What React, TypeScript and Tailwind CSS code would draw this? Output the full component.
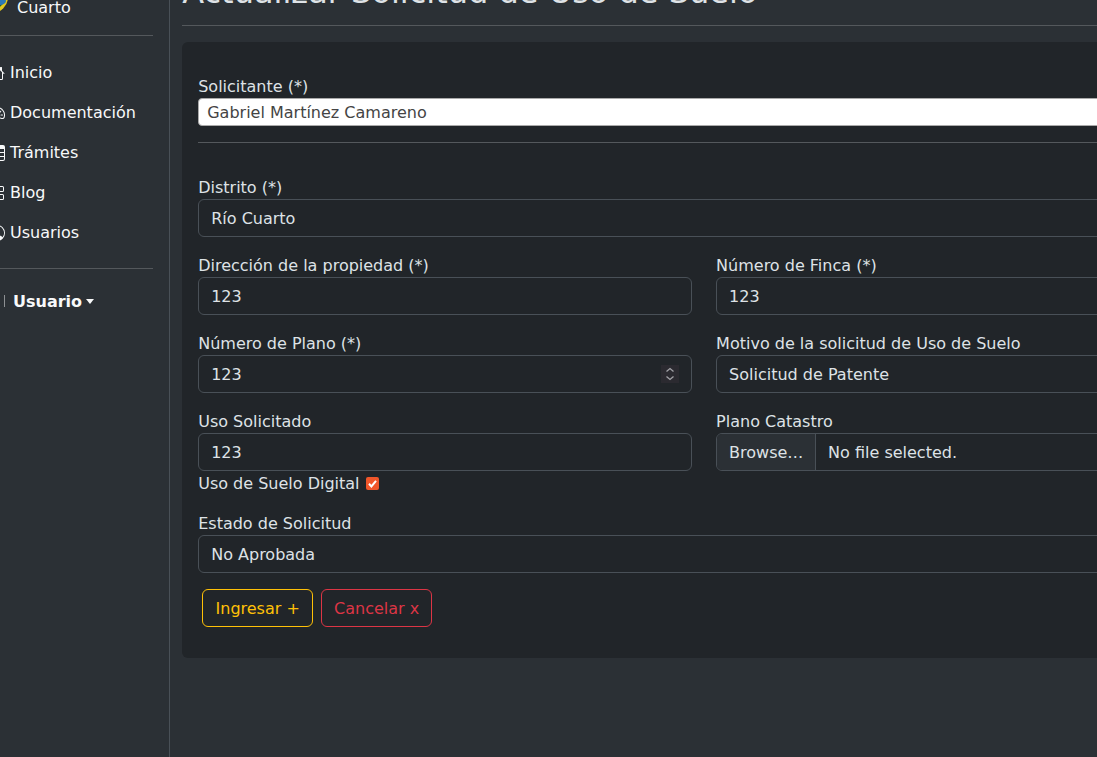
import type { ReactNode } from "react";
import { BsGrid, BsHouse, BsPersonCircle, BsSpeedometer2, BsTable } from "react-icons/bs";

const navItems = [
  { label: "Inicio", icon: BsHouse },
  { label: "Documentación", icon: BsSpeedometer2 },
  { label: "Trámites", icon: BsTable },
  { label: "Blog", icon: BsGrid },
  { label: "Usuarios", icon: BsPersonCircle },
];

const Logo = () => (
  <svg viewBox="0 0 32 32" className="w-8 h-8 -my-1 -ml-[13px] mr-[9px] shrink-0 -translate-y-[10px]">
    <circle cx="16" cy="16" r="16" fill="#e2c91f" />
    <circle cx="15.5" cy="14.5" r="14" fill="#1f5a34" />
    <ellipse cx="24" cy="20" rx="6" ry="4" fill="#2c79b8" />
    <ellipse cx="24" cy="14" rx="5" ry="3" fill="#3f9a4a" />
  </svg>
);

const Field = ({ label, children }: { label: string; children: ReactNode }) => (
  <div className="mb-4">
    <div className="h-6 leading-[26px] text-[#dee2e6]">{label}</div>
    {children}
  </div>
);

const Control = ({ children }: { children: ReactNode }) => (
  <div className="relative h-[38px] px-3 pt-[2px] flex items-center rounded-md border border-[#495057] bg-[#212529] text-[#dee2e6]">
    {children}
  </div>
);

const Spinner = () => (
  <div className="absolute right-[12px] top-[9px] w-[18px] h-[18px] bg-[#2b2a30] flex items-center justify-center">
    <svg viewBox="0 0 18 18" className="w-[18px] h-[18px]" fill="none" stroke="#a3a3a8" strokeWidth="1.3">
      <path d="M5.5 6.5 9 3.5l3.5 3" />
      <path d="M5.5 11.5 9 14.5l3.5-3" />
    </svg>
  </div>
);

export default function App() {
  return (
    <div className="w-[1097px] h-[757px] overflow-hidden bg-[#2b3035] font-['DejaVu_Sans',sans-serif] text-base text-[#dee2e6]">
      <div className="flex w-[1265px] min-h-[817px] -mt-[60px] -ml-[27px]">
        <aside className="w-[197.2px] shrink-0 pt-[55px] pl-4 pr-4 border-r border-[#495057] text-[#f8f9fa]">
          <div className="flex items-center h-6 leading-6">
            <Logo />
            <span className="pt-[2px]">Cuarto</span>
          </div>
          <hr className="my-4 border-[#54585c]" />
          <ul>
            {navItems.map((item) => (
              <li key={item.label} className="flex items-center h-10 pt-[2px] gap-[5px]">
                <item.icon className="w-4 h-4 shrink-0" />
                <span>{item.label}</span>
              </li>
            ))}
          </ul>
          <hr className="my-4 border-[#54585c]" />
          <div className="flex items-center h-8 font-bold">
            <div className="w-px h-3 ml-[15px] mr-2 shrink-0 bg-[#8d9093]" />
            <span className="pt-[2px]">Usuario</span>
            <span className="ml-1 border-t-[5px] border-x-[4px] border-x-transparent border-t-[#f8f9fa]" />
          </div>
        </aside>

        <main className="flex-1 pt-[33px] px-3">
          <h2 className="h-[39px] mb-[13px] text-[32px] leading-[38px] text-[#dee2e6]">
            Actualizar Solicitud de Uso de Suelo
          </h2>
          <hr className="mb-4 border-[#54585c]" />

          <div className="rounded-md bg-[#212529] px-4 pt-8 pb-[31px]">
            <div className="h-6 leading-[26px] text-[#dee2e6]">Solicitante (*)</div>
            <div className="h-[28px] px-2 pt-[2px] flex items-center bg-white rounded border border-[#aaaaaa] text-[#444444]">
              Gabriel Martínez Camareno
            </div>
            <hr className="mt-4 mb-8 border-[#54585c]" />

            <Field label="Distrito (*)">
              <Control>Río Cuarto</Control>
            </Field>

            <div className="grid grid-cols-2 gap-x-6">
              <Field label="Dirección de la propiedad (*)">
                <Control>123</Control>
              </Field>
              <Field label="Número de Finca (*)">
                <Control>123</Control>
              </Field>
              <Field label="Número de Plano (*)">
                <Control>
                  123
                  <Spinner />
                </Control>
              </Field>
              <Field label="Motivo de la solicitud de Uso de Suelo">
                <Control>Solicitud de Patente</Control>
              </Field>
              <div className="mb-4">
                <div className="h-6 leading-[26px]">Uso Solicitado</div>
                <Control>123</Control>
                <div className="flex items-center h-6 leading-6">
                  <span className="pt-[2px]">Uso de Suelo Digital</span>
                  <span className="ml-[6px] w-[13px] h-[13px] rounded-[2px] bg-[#f0562a] flex items-center justify-center">
                    <svg viewBox="0 0 13 13" className="w-[13px] h-[13px]" fill="none" stroke="white" strokeWidth="2">
                      <path d="M3 6.8 5.4 9.4 10 3.8" />
                    </svg>
                  </span>
                </div>
              </div>
              <Field label="Plano Catastro">
                <div className="flex h-[38px] rounded-md border border-[#495057] overflow-hidden">
                  <div className="w-[99px] px-3 pt-[2px] flex items-center bg-[#2b3035] border-r border-[#495057]">Browse…</div>
                  <div className="px-3 pt-[2px] flex items-center">No file selected.</div>
                </div>
              </Field>
            </div>

            <Field label="Estado de Solicitud">
              <Control>No Aprobada</Control>
            </Field>

            <div className="flex gap-2 ml-1">
              <button className="w-[111px] h-[38px] pt-[2px] rounded-md border border-[#ffc107] text-[#ffc107]">Ingresar +</button>
              <button className="w-[111px] h-[38px] pt-[2px] rounded-md border border-[#dc3545] text-[#dc3545]">Cancelar x</button>
            </div>
          </div>
        </main>
      </div>
    </div>
  );
}
